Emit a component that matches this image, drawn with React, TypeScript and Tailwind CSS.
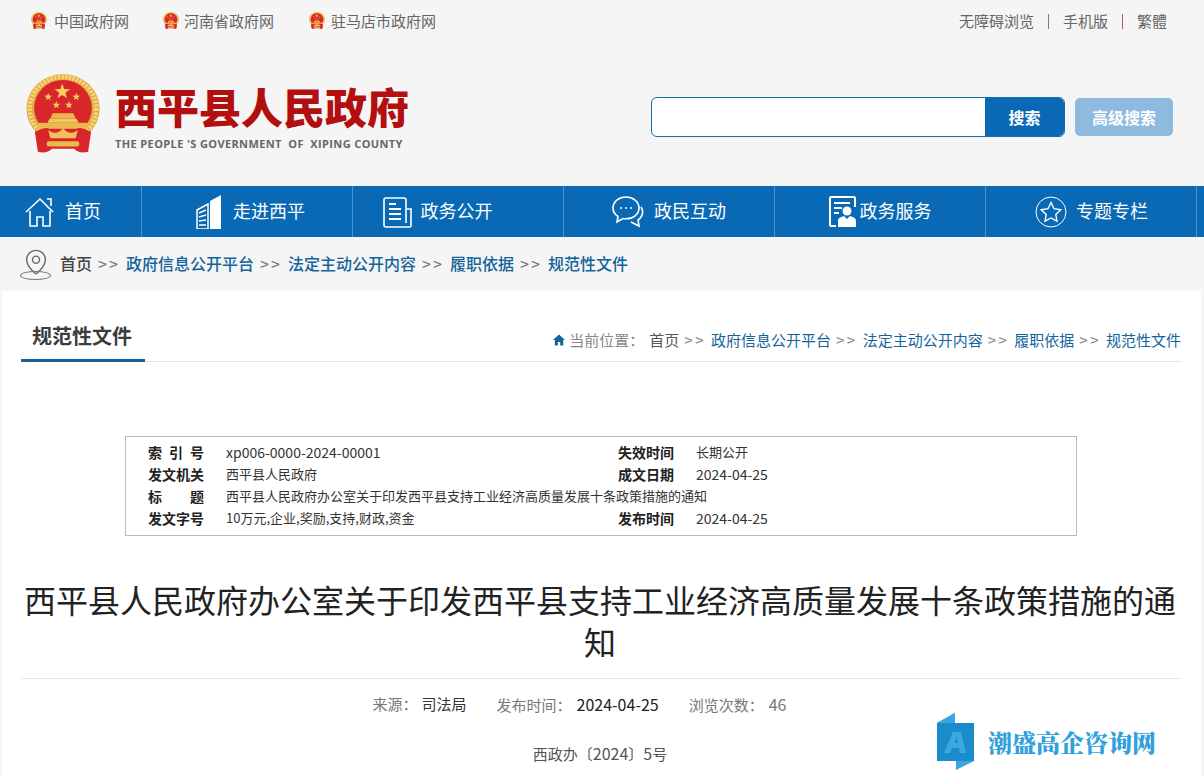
import { MapPin } from "lucide-react";

const FONT = "font-['Noto_Sans_CJK_SC','Noto_Sans',sans-serif]";

const starPoints = (cx: number, cy: number, r: number) => {
  const pts: string[] = [];
  for (let i = 0; i < 10; i++) {
    const rad = i % 2 === 0 ? r : r * 0.4;
    const a = -Math.PI / 2 + (i * Math.PI) / 5;
    pts.push(`${(cx + rad * Math.cos(a)).toFixed(1)},${(cy + rad * Math.sin(a)).toFixed(1)}`);
  }
  return pts.join(" ");
};

const Emblem = ({ size }: { size: number }) => (
  <svg width={size} height={size * 1.07} viewBox="0 0 100 107">
    <ellipse cx="50" cy="47" rx="49.500" ry="47" fill="#e2ad45" />
    <ellipse cx="50" cy="47" rx="45" ry="43" fill="none" stroke="#f5d77f" strokeWidth="6" strokeDasharray="3 2" />
    <ellipse cx="50" cy="46" rx="39" ry="38" fill="#d8262a" />
    <polygon points={starPoints(49, 24, 11)} fill="#f7cf5a" />
    <polygon points={starPoints(30, 31, 5.500)} fill="#f7cf5a" />
    <polygon points={starPoints(68, 31, 5.500)} fill="#f7cf5a" />
    <polygon points={starPoints(41, 42, 5.500)} fill="#f7cf5a" />
    <polygon points={starPoints(58, 42, 5.500)} fill="#f7cf5a" />
    <path d="M32 60h36l3 6H29z" fill="#f2c860" />
    <path d="M36 53h28l3 7H33z" fill="#e8b64c" />
    <rect x="17" y="66" width="66" height="8" fill="#eab94d" />
    <path d="M12 78c6-3 12-5 18-5l3 8h34l3-8c6 0 12 2 18 5l-4 27c-8 2-14 1-19-4H35c-5 5-11 6-19 4z" fill="#d8262a" />
    <path d="M30 76c8 5 14 5 20-3 6 8 12 8 20 3l-3 11H33z" fill="#f0c25a" />
    <rect x="28" y="91" width="44" height="7" rx="3" fill="#eab94d" />
  </svg>
);

const NavIcon = ({ kind }: { kind: string }) => {
  const p = { fill: "none", stroke: "#fff", strokeWidth: 1.6 };
  if (kind === "home")
    return (
      <svg width="32" height="32" viewBox="0 0 32 32" {...p}>
        <path d="M2 16 16 3l13 13" />
        <path d="M23 3h4v7" />
        <path d="M6 15v15h7v-9h6v9h7V15" />
      </svg>
    );
  if (kind === "city")
    return (
      <svg width="26" height="34" viewBox="0 0 26 34">
        <path d="M14 6 25 0v34H14z" fill="#fff" />
        <path d="M1 15 12 9v25H1z" fill="none" stroke="#fff" strokeWidth="1.5" />
        <path d="M3 18l7-3M3 22l7-2M3 26l7-1M3 30h7" stroke="#fff" strokeWidth="1.5" />
      </svg>
    );
  if (kind === "doc")
    return (
      <svg width="30" height="32" viewBox="0 0 30 32" {...p}>
        <path d="M24 27V4a2 2 0 0 0-2-2H4a2 2 0 0 0-2 2v25a2 2 0 0 0 2 2h24a1 1 0 0 0 1-1V13h-5" />
        <path d="M7 8h7M7 13h12M7 18h12M7 23h12" strokeWidth="2" />
      </svg>
    );
  if (kind === "chat")
    return (
      <svg width="32" height="33" viewBox="0 0 32 33" {...p}>
        <path d="M14 2C7 2 1 6.500 1 13c0 3.500 2 6.500 5 8.500L5 27l6-3.500c1 .2 2 .3 3 .3 7 0 13-4.500 13-10.800S21 2 14 2z" />
        <path d="M29 12c2 3 2 7 0 10-1 1.500-2 2.500-3 3l1 6-8-4" />
        <circle cx="9" cy="13" r="1" fill="#fff" stroke="none" />
        <circle cx="14" cy="13" r="1" fill="#fff" stroke="none" />
        <circle cx="19" cy="13" r="1" fill="#fff" stroke="none" />
      </svg>
    );
  if (kind === "person")
    return (
      <svg width="27" height="31" viewBox="0 0 27 31">
        <path d="M7 30H2a1 1 0 0 1-1-1V2a1 1 0 0 1 1-1h23a1 1 0 0 1 1 1v9" fill="none" stroke="#fff" strokeWidth="2" />
        <path d="M5 7h16M5 12h8M5 17h5" stroke="#fff" strokeWidth="2" />
        <circle cx="18" cy="15" r="4.500" fill="#fff" />
        <path d="M9 31v-6c0-3 3-4 6-5l3 3 3-3c3 1 6 2 6 5v6z" fill="#fff" />
      </svg>
    );
  return (
    <svg width="32" height="32" viewBox="0 0 32 32" fill="none" stroke="#fff">
      <circle cx="16" cy="16" r="15" strokeWidth="1" />
      <path d="M16 6.500l3 6.200 6.800 1-5 4.700 1.200 6.800-6-3.200-6 3.200 1.200-6.800-5-4.700 6.800-1z" strokeWidth="1.400" />
    </svg>
  );
};

const nav = [
  { label: "首页", icon: "home", cls: "w-[142px] gap-[9px] pr-[16px]" },
  { label: "走进西平", icon: "city", cls: "w-[211px] gap-[11px] pl-[7px]" },
  { label: "政务公开", icon: "doc", cls: "w-[211px] gap-[9px] pr-[42px]" },
  { label: "政民互动", icon: "chat", cls: "w-[211px] gap-[10px]" },
  { label: "政务服务", icon: "person", cls: "w-[211px] gap-[4px]" },
  { label: "专题专栏", icon: "star", cls: "w-[211px] gap-[9px] pl-[1px]" },
];

const topLinks = [
  { label: "中国政府网", w: "w-[132px] gap-[7px]" },
  { label: "河南省政府网", w: "w-[146px] gap-[5px]" },
  { label: "驻马店市政府网", w: "gap-[6px]" },
];

const Sep = () => <span className="text-[#777] font-normal mx-[6px] tracking-[2.100px]">&gt;&gt;</span>;
const Sep2 = () => <span className="text-[#888] mx-[5px] tracking-[2.500px]">&gt;&gt;</span>;

const InfoRow = ({ a, b, c, d }: { a: React.ReactNode; b: React.ReactNode; c?: string; d?: React.ReactNode }) => (
  <div className="flex h-[22px] items-center">
    <div className="w-[56px] ml-[22px] text-[14px] font-bold text-[#222] flex justify-between">{a}</div>
    <div className="ml-[22px] w-[392px] whitespace-nowrap text-[#333]">{b}</div>
    {c && <div className="w-[56px] text-[14px] font-bold text-[#222]">{c}</div>}
    {d && <div className="ml-[22px] text-[#333]">{d}</div>}
  </div>
);

const Num = ({ children }: { children: React.ReactNode }) => <span className="text-[14px]">{children}</span>;

export default function App() {
  return (
    <div className={`${FONT} w-[1204px] h-[776px] overflow-hidden bg-[#f5f5f5] relative`}>
      <div className="h-[40px] pt-[2px] pl-[31px] pr-[37px] flex items-center justify-between text-[15px] text-[#666]">
        <div className="flex">
          {topLinks.map((l) => (
            <div key={l.label} className={`flex items-center ${l.w}`}>
              <Emblem size={16} />
              <span>{l.label}</span>
            </div>
          ))}
        </div>
        <div className="flex items-center">
          <span>无障碍浏览</span>
          <span className="mx-[14px] w-px h-[15px] bg-[#8a7a76]" />
          <span>手机版</span>
          <span className="mx-[14px] w-px h-[15px] bg-[#a0655a]" />
          <span>繁體</span>
        </div>
      </div>

      <div className="h-[146px] pt-[4px] pl-[26px] pr-[31px] flex items-center justify-between">
        <div className="flex items-center gap-[15px] -mt-[3px]">
          <Emblem size={74} />
          <div className="pt-[9px]">
            <div className="text-[42px] leading-[42px] font-black text-[#b30f0f]">西平县人民政府</div>
            <div className="text-[11px] font-bold leading-[14px] mt-[10px] text-[#666] font-['Open_Sans'] whitespace-pre tracking-[0.380px]">
              THE PEOPLE 'S GOVERNMENT  OF  XIPING COUNTY
            </div>
          </div>
        </div>
        <div className="flex items-center gap-[10px] mt-[4px]">
          <div className="flex w-[414px] h-[40px] rounded-[6px] border border-[#16709f] bg-white overflow-hidden">
            <div className="flex-1" />
            <div className="w-[79px] bg-[#0a69b5] text-white font-bold text-[16px] flex items-center justify-center">搜索</div>
          </div>
          <div className="w-[98px] h-[38px] rounded-[5px] bg-[#8fbae0] text-white font-bold text-[16px] flex items-center justify-center">高级搜索</div>
        </div>
      </div>

      <div className="h-[51px] bg-[#0a69b5] flex text-white text-[18px]">
        {nav.map((n) => (
          <div key={n.label} className={`${n.cls} h-full flex items-center justify-center border-r border-[#4b93d0]`}>
            <NavIcon kind={n.icon} />
            <span className="-mt-[2px]">{n.label}</span>
          </div>
        ))}
      </div>

      <div className="h-[54px] pl-[20px] flex items-center text-[16px] font-medium text-[#14649c]">
        <div className="relative w-[32px] h-[32px] mr-[8px]">
          <MapPin size={28} strokeWidth={1.2} className="text-[#666] absolute left-[2px] top-0" />
          <div className="absolute left-0 bottom-0 w-[31px] h-[9px] rounded-[50%] border border-[#777]" />
        </div>
        <div className="flex items-center -mt-[2px]">
          <span className="text-[#444]">首页</span>
          <Sep />
          <span>政府信息公开平台</span>
          <Sep />
          <span>法定主动公开内容</span>
          <Sep />
          <span>履职依据</span>
          <Sep />
          <span>规范性文件</span>
        </div>
      </div>

      <div className="mx-[2px] w-[1199px] h-[485px] bg-white pl-[19px] pr-[20px]">
        <div className="h-[71px] flex items-end justify-between border-b border-[#e2e2e2]">
          <div className="w-[124px] h-[45px] -mb-px pt-[5px] pr-[2px] border-b-[3px] border-[#14649c] text-[20px] leading-[28px] font-bold text-[#3c3c3c] text-center">
            规范性文件
          </div>
          <div className="flex items-center h-[24px] mb-[9px] text-[15px] text-[#14649c] whitespace-nowrap">
            <svg width="12" height="12" viewBox="0 0 12 12" className="mr-[4px]">
              <path d="M6 .5 0 6h1.800v5.500h3V8h2.400v3.500h3V6H12z" fill="#14649c" />
            </svg>
            <span className="text-[#888]">当前位置：</span>
            <span className="ml-[5px] text-[#555]">首页</span>
            <Sep2 />
            <span>政府信息公开平台</span>
            <Sep2 />
            <span>法定主动公开内容</span>
            <Sep2 />
            <span>履职依据</span>
            <Sep2 />
            <span>规范性文件</span>
          </div>
        </div>

        <div className="mt-[74px] ml-[104px] w-[952px] h-[100px] border border-[#bbb] pt-[4px] text-[13px]">
          <InfoRow a={<><span>索</span><span>引</span><span>号</span></>} b={<Num>xp006-0000-2024-00001</Num>} c="失效时间" d="长期公开" />
          <InfoRow a="发文机关" b="西平县人民政府" c="成文日期" d={<Num>2024-04-25</Num>} />
          <InfoRow a={<><span>标</span><span>题</span></>} b="西平县人民政府办公室关于印发西平县支持工业经济高质量发展十条政策措施的通知" />
          <InfoRow a="发文字号" b="10万元,企业,奖励,支持,财政,资金" c="发布时间" d={<Num>2024-04-25</Num>} />
        </div>

        <h1 className="mt-[42px] pr-[2px] text-[32px] leading-[42px] text-[#222] text-center">
          西平县人民政府办公室关于印发西平县支持工业经济高质量发展十条政策措施的通知
        </h1>

        <div className="mt-[16px] pt-[15px] border-t border-[#e6e6e6] flex justify-center gap-[30px] text-[15px] leading-[20px] text-[#777] pr-[43px]">
          <span>来源：<span className="ml-[4px] text-[#333]">司法局</span></span>
          <span>发布时间：<span className="ml-[5px] text-[16px] text-[#222]">2024-04-25</span></span>
          <span>浏览次数：<span className="ml-[5px] text-[16px]">46</span></span>
        </div>
        <div className="mt-[28px] pr-[2px] text-center text-[15px] leading-[20px] text-[#555]">
          西政办〔<span className="text-[16px]">2024</span>〕<span className="text-[16px]">5</span>号
        </div>
      </div>

      <div className="absolute left-[937px] top-[713px] flex items-center gap-[14px]">
        <svg width="37" height="57" viewBox="0 0 37 57">
          <path d="M0 10 18 0v10h19v38H19v9l0-9H0z" fill="#1a8ccb" />
          <path d="M19 48h18L19 57z" fill="#3aa5de" />
          <path d="M18 0v10H0z" fill="#3aa5de" />
          <path d="M7 40 16 19h8l5 21h-6l-1-5h-7l-2 5zm10-10h4l-1-6z" fill="#3da8e0" fillRule="evenodd" />
        </svg>
        <span className="font-['Noto_Serif_CJK_SC','Noto_Sans_CJK_SC',serif] text-[24px] font-black text-[#31a0dc] whitespace-nowrap">潮盛高企咨询网</span>
      </div>
    </div>
  );
}
